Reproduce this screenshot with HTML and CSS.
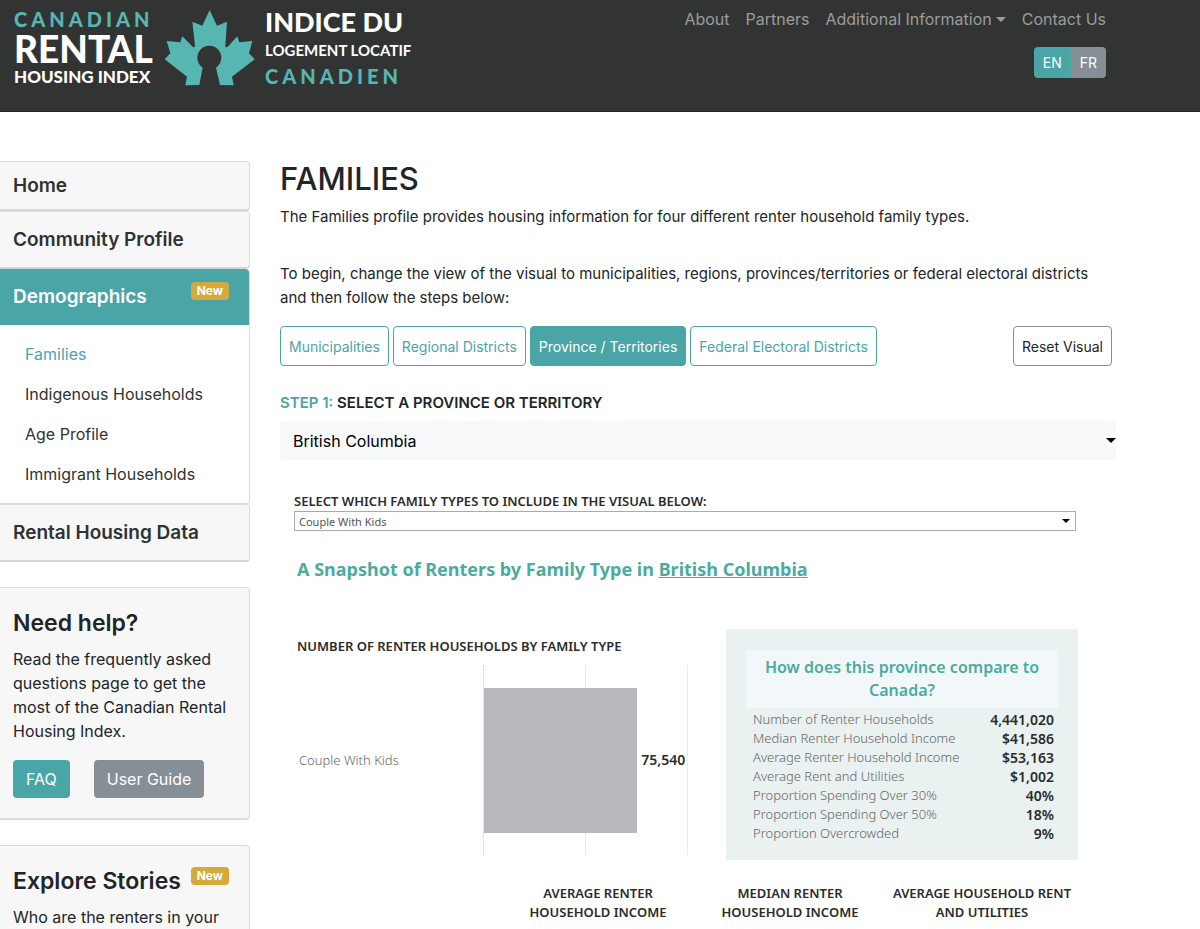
FILE: index.html
```html
<!DOCTYPE html>
<html lang="en">
<head>
<meta charset="utf-8">
<meta name="viewport" content="width=device-width, initial-scale=1">
<title>Families - Canadian Rental Housing Index</title>
<link rel="stylesheet" href="styles.css">
</head>
<body>
<header class="site-header">
  <a class="logo" href="#">
    <span class="logo-words logo-en">
      <span class="logo-canadian">CANADIAN</span>
      <span class="logo-rental">RENTAL</span>
      <span class="logo-housing">HOUSING INDEX</span>
    </span>
    <svg class="logo-leaf" viewBox="0 0 300 270" aria-hidden="true">
      <path fill="#56b6b2" d="M149 15 L171 62 L201 50 L196 122 Q197 130 203 125 L232 94 L238 112 L277 108 L267 145 L284 163 L216 215 L221 241 L180 240 L168 188 A36 36 0 1 0 128 188 L118 240 L76 241 L81 215 L14 163 L31 145 L20 108 L61 112 L67 94 L98 125 Q104 130 105 122 L97 50 L127 62 Z"/>
    </svg>
    <span class="logo-words logo-fr">
      <span class="logo-indice">INDICE DU</span>
      <span class="logo-logement">LOGEMENT LOCATIF</span>
      <span class="logo-canadien">CANADIEN</span>
    </span>
  </a>
  <div class="header-side">
    <nav class="top-nav" aria-label="Main">
      <a href="#">About</a>
      <a href="#">Partners</a>
      <a class="has-menu" href="#">Additional Information</a>
      <a href="#">Contact Us</a>
    </nav>
    <div class="lang" role="group" aria-label="Language">
      <button class="lang-on" type="button">EN</button>
      <button type="button">FR</button>
    </div>
  </div>
</header>

<div class="page">
  <aside class="sidebar">
    <nav class="menu" aria-label="Sections">
      <a class="menu-item menu-home" href="#">Home</a>
      <a class="menu-item" href="#">Community Profile</a>
      <div class="menu-group">
        <a class="menu-item menu-active" href="#">Demographics <span class="badge">New</span></a>
        <ul class="submenu">
          <li><a class="current" href="#">Families</a></li>
          <li><a href="#">Indigenous Households</a></li>
          <li><a href="#">Age Profile</a></li>
          <li><a href="#">Immigrant Households</a></li>
        </ul>
      </div>
      <a class="menu-item" href="#">Rental Housing Data</a>
    </nav>
    <section class="card">
      <h2>Need help?</h2>
      <p>Read the frequently asked questions page to get the most of the Canadian Rental Housing Index.</p>
      <div class="card-actions">
        <a class="btn btn-teal" href="#">FAQ</a>
        <a class="btn btn-grey" href="#">User Guide</a>
      </div>
    </section>
    <section class="card card-last">
      <h2>Explore Stories <span class="badge">New</span></h2>
      <p>Who are the renters in your</p>
    </section>
  </aside>

  <main class="content">
    <h1>FAMILIES</h1>
    <p class="lead">The Families profile provides housing information for four different renter household family types.</p>
    <p class="lead">To begin, change the view of the visual to municipalities, regions, provinces/territories or federal electoral districts<br>and then follow the steps below:</p>
    <div class="toolbar">
      <button class="view" type="button">Municipalities</button>
      <button class="view" type="button">Regional Districts</button>
      <button class="view view-on" type="button">Province / Territories</button>
      <button class="view" type="button">Federal Electoral Districts</button>
      <button class="view view-reset" type="button">Reset Visual</button>
    </div>
    <label class="step" for="province"><span>STEP 1:</span> SELECT A PROVINCE OR TERRITORY</label>
    <div class="select-wrap province-wrap">
      <select id="province" class="province"><option>British Columbia</option></select>
    </div>

    <section class="visual">
      <label class="viz-label" for="family">SELECT WHICH FAMILY TYPES TO INCLUDE IN THE VISUAL BELOW:</label>
      <div class="select-wrap family-wrap">
        <select id="family" class="family"><option>Couple With Kids</option></select>
      </div>
      <h2 class="viz-title">A Snapshot of Renters by Family Type in <a href="#">British Columbia</a></h2>
      <div class="viz-row">
        <div class="chart">
          <h3>NUMBER OF RENTER HOUSEHOLDS BY FAMILY TYPE</h3>
          <div class="chart-body">
            <span class="chart-name">Couple With Kids</span>
            <div class="plot">
              <div class="bar" style="width:75.5%"></div>
              <span class="bar-value">75,540</span>
            </div>
          </div>
        </div>
        <div class="compare">
          <h3>How does this province compare to Canada?</h3>
          <table>
            <tr><th scope="row">Number of Renter Households</th><td>4,441,020</td></tr>
            <tr><th scope="row">Median Renter Household Income</th><td>$41,586</td></tr>
            <tr><th scope="row">Average Renter Household Income</th><td>$53,163</td></tr>
            <tr><th scope="row">Average Rent and Utilities</th><td>$1,002</td></tr>
            <tr><th scope="row">Proportion Spending Over 30%</th><td>40%</td></tr>
            <tr><th scope="row">Proportion Spending Over 50%</th><td>18%</td></tr>
            <tr><th scope="row">Proportion Overcrowded</th><td>9%</td></tr>
          </table>
        </div>
      </div>
      <div class="measures">
        <h3>AVERAGE RENTER<br>HOUSEHOLD INCOME</h3>
        <h3>MEDIAN RENTER<br>HOUSEHOLD INCOME</h3>
        <h3>AVERAGE HOUSEHOLD RENT<br>AND UTILITIES</h3>
      </div>
    </section>
  </main>
</div>
</body>
</html>
```
FILE: styles.css
```css
* { box-sizing: border-box; }

body {
  margin: 0;
  min-height: 100vh;
  display: flex;
  flex-direction: column;
  font-family: Inter, "Liberation Sans", sans-serif;
  font-size: 16px;
  line-height: 24px;
  color: #212529;
  background: #fff;
}

h1, h2, h3, p, ul { margin: 0; padding: 0; }
ul { list-style: none; }
a { color: inherit; text-decoration: none; }
button, select { font-family: inherit; margin: 0; cursor: pointer; }

/* Header */
.site-header {
  display: flex;
  justify-content: space-between;
  align-items: flex-start;
  height: 112px;
  padding: 5px 94px 0 14px;
  background: #323433;
  border-bottom: 1px solid #222423;
}
.logo {
  display: flex;
  gap: 5px;
  font-family: Lato, sans-serif;
  font-weight: 900;
  color: #fff;
  white-space: nowrap;
}
.logo-words { display: flex; flex-direction: column; }
.logo-en { width: 141px; padding-top: 2px; }
.logo-leaf { width: 100px; height: 90px; }
.logo-canadian, .logo-canadien { color: #56b6b2; letter-spacing: 4px; }
.logo-canadian { font-size: 20px; line-height: 24px; }
.logo-rental { font-size: 37px; line-height: 35px; }
.logo-housing { font-size: 17px; line-height: 22px; }
.logo-indice { font-size: 27px; line-height: 33px; }
.logo-logement { font-size: 15px; line-height: 24px; font-weight: 700; }
.logo-canadien { font-size: 20px; line-height: 28px; }

.header-side {
  display: flex;
  flex-direction: column;
  align-items: flex-end;
  gap: 16px;
  padding-top: 2px;
}
.top-nav { display: flex; gap: 16px; color: #9b9c9c; }
.has-menu { display: flex; align-items: center; gap: 4px; }
.has-menu::after {
  content: "";
  border: 5px solid transparent;
  border-top-color: currentColor;
  border-bottom: 0;
}
.lang { display: flex; border-radius: 4px; overflow: hidden; }
.lang button {
  height: 31px;
  padding: 0 9px;
  border: 0;
  font-size: 14px;
  color: #fff;
  background: #868e96;
}
.lang .lang-on { background: #4aa5a7; }

/* Page columns */
.page { display: flex; flex: 1; gap: 30px; padding-top: 49px; }
.sidebar { display: flex; flex-direction: column; width: 250px; flex: none; }
.content { flex: 1; min-width: 0; padding-right: 84px; }

/* Sidebar menu */
.menu { font-weight: 600; font-size: 19px; color: #2f3132; }
.menu-item {
  display: flex;
  align-items: center;
  height: 58px;
  padding: 0 20px 0 13px;
  border: 1px solid #dcdcdc;
  border-bottom: 2px solid #d6d6d6;
  border-left: 0;
  border-radius: 0 4px 4px 0;
  background: #f7f7f7;
}
.menu-home { height: 50px; }
.menu-group {
  border: 1px solid #dcdcdc;
  border-top: 0;
  border-left: 0;
  border-radius: 0 4px 4px 0;
}
.menu-active {
  height: 56px;
  justify-content: space-between;
  color: #fff;
  background: #4aa5a7;
  border: 0;
  border-radius: 0 4px 0 0;
}
.badge {
  align-self: flex-start;
  margin-top: 13px;
  padding: 0 6px;
  border-radius: 4px;
  font-size: 12px;
  line-height: 18px;
  font-weight: 700;
  color: #fff;
  background: #d6a93b;
}
.submenu {
  display: grid;
  gap: 16px;
  padding: 17px 0 17px 25px;
  font-size: 16px;
  font-weight: 400;
}
.submenu .current { color: #4aa5a7; }

/* Sidebar cards */
.card {
  margin-top: 25px;
  padding: 21px 20px 20px 13px;
  border: 1px solid #dcdcdc;
  border-left: 0;
  border-bottom-width: 2px;
  border-radius: 0 4px 4px 0;
  background: #f7f7f7;
}
.card h2 {
  display: flex;
  justify-content: space-between;
  margin-bottom: 10px;
  font-size: 23px;
  line-height: 28px;
  font-weight: 600;
}
.card .badge { margin-top: 0; }
.card-last {
  flex: 1;
  padding-bottom: 0;
  border-bottom: 0;
  border-radius: 0 4px 0 0;
}
.card-actions { display: flex; gap: 24px; margin-top: 17px; }
.btn {
  padding: 7px 13px;
  border-radius: 4px;
  color: #fff;
}
.btn-teal { background: #4aa5a7; }
.btn-grey { background: #868e96; }

/* Content */
.content h1 { font-size: 31px; line-height: 36px; font-weight: 500; margin-bottom: 8px; }
.lead { margin-bottom: 33px; font-size: 15px; }
.lead + .lead { margin-bottom: 16px; }
.toolbar { display: flex; gap: 4px; padding-right: 4px; }
.view {
  height: 40px;
  padding: 0 8px;
  border: 1px solid #4aa5a7;
  border-radius: 4px;
  font-size: 14px;
  color: #4aa5a7;
  background: #fff;
  white-space: nowrap;
}
.view-on { color: #fff; background: #4aa5a7; }
.view-reset { margin-left: auto; color: #212529; border-color: #868e96; }
.step { display: block; margin: 25px 0 6px; font-size: 15px; font-weight: 600; }
.step span { color: #4aa5a7; }

.select-wrap { position: relative; }
.select-wrap::after {
  content: "";
  position: absolute;
  top: 50%;
  right: 0;
  margin-top: -3px;
  border: 5px solid transparent;
  border-top-color: #000;
  border-bottom: 0;
  pointer-events: none;
}
.select-wrap select { display: block; width: 100%; appearance: none; }
.province {
  height: 39px;
  padding: 0 13px;
  border: 0;
  border-radius: 4px;
  font-size: 16px;
  color: #000;
  background: #f8f9fb;
}

/* Data visual */
.visual {
  padding: 32px 38px 0 14px;
  font-family: "Noto Sans", "Open Sans", sans-serif;
  color: #2b2b2b;
}
.viz-label { display: block; font-size: 13px; line-height: 18px; font-weight: 600; }
.family-wrap { margin: 1px 2px 0 0; }
.family-wrap::after { right: 6px; border-width: 4px; border-bottom: 0; margin-top: -2px; }
.family {
  height: 20px;
  padding: 0 4px;
  border: 1px solid #aaa;
  border-radius: 0;
  font-size: 11px;
  color: #555;
  background: #fff;
}
.viz-title {
  margin: 24px 0 0 3px;
  font-size: 18px;
  line-height: 28px;
  font-weight: 700;
  color: #4bab9f;
}
.viz-title a { text-decoration: underline; }
.viz-row { display: flex; gap: 38px; margin-top: 46px; padding-left: 3px; }
.chart { flex: 1; padding-top: 8px; }
.chart h3, .measures h3 { font-size: 13px; line-height: 19px; font-weight: 600; }
.chart-body { display: flex; align-items: center; margin-top: 9px; }
.chart-name { width: 186px; padding-left: 2px; font-size: 13px; font-weight: 300; color: #666; }
.plot {
  display: flex;
  align-items: center;
  flex: 1;
  height: 190px;
  border-left: 1px dotted #ccc;
  border-right: 1px solid #ebebeb;
  background: linear-gradient(#ebebeb, #ebebeb) center / 1px 100% no-repeat;
}
.bar { height: 145px; flex: none; background: #b8b9bc; }
.bar-value { margin-left: 4px; font-size: 14px; font-weight: 600; }
.compare { width: 352px; padding: 21px 20px 17px; background: #e9f1f1; }
.compare h3 {
  padding: 6px 16px;
  font-size: 16px;
  line-height: 23px;
  font-weight: 600;
  text-align: center;
  color: #4bab9f;
  background: #f2f8f9;
}
.compare table { width: 100%; margin-top: 2px; border-collapse: collapse; font-size: 13px; line-height: 19px; }
.compare th { padding: 0 0 0 7px; text-align: left; font-weight: 300; color: #666; }
.compare td { padding: 0 4px 0 0; text-align: right; font-size: 14px; font-weight: 600; }
.measures {
  display: grid;
  grid-template-columns: repeat(3, 1fr);
  margin: 24px 0 0 208px;
  text-align: center;
  white-space: nowrap;
}
```
